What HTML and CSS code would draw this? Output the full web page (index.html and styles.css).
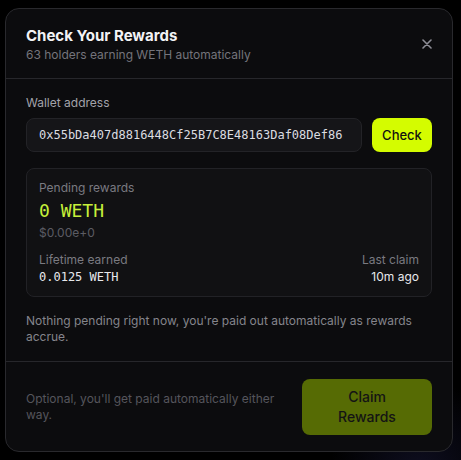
FILE: index.html
```html
<!DOCTYPE html>
<html lang="en">
<head>
  <meta charset="UTF-8" />
  <meta name="viewport" content="width=device-width, initial-scale=1.0" />
  <title>Check Your Rewards</title>
  <link rel="stylesheet" href="styles.css">
</head>
<body>
  <!-- ===== rewards modal ===== -->
  <div class="modal">
    <div class="modal-header">
      <div class="modal-titles">
        <h2 class="modal-title">Check Your Rewards</h2>
        <p class="modal-sub">63 holders earning WETH automatically</p>
      </div>
      <button class="close-btn" aria-label="Close">
        <svg width="10" height="10" viewBox="0 0 10 10"><path d="M1 1L9 9M9 1L1 9" stroke="#8e8e96" stroke-width="1.6" stroke-linecap="round"/></svg>
      </button>
    </div>

    <div class="modal-body">
      <label class="field-label">Wallet address</label>
      <div class="wallet-row">
        <div class="wallet-input">0x55bDa407d8816448Cf25B7C8E48163Daf08Def86</div>
        <button class="check-btn">Check</button>
      </div>

      <div class="reward-card">
        <div class="card-label">Pending rewards</div>
        <div class="pending-amount">0 WETH</div>
        <div class="pending-usd">$0.00e+0</div>
        <div class="stats-row">
          <div>
            <div class="card-label">Lifetime earned</div>
            <div class="stat-mono">0.0125 WETH</div>
          </div>
          <div class="stat-right">
            <div class="card-label">Last claim</div>
            <div class="stat-value">10m ago</div>
          </div>
        </div>
      </div>

      <p class="note">Nothing pending right now, you're paid out automatically as rewards accrue.</p>
    </div>

    <div class="modal-footer">
      <p class="footer-note">Optional, you'll get paid automatically either way.</p>
      <button class="claim-btn">Claim<br>Rewards</button>
    </div>
  </div>
</body>
</html>
```

FILE: styles.css
```css
body {
  margin: 0;
  height: 100vh;
  padding: 8px 0 0 5px;
  display: flex;
  align-items: flex-start;
  justify-content: flex-start;
  font-family: Inter, 'Noto Sans', sans-serif;
  background: radial-gradient(circle at 420px 470px, rgba(40, 40, 90, 0.35), rgba(0, 0, 0, 0) 90px), #000;
  box-sizing: border-box;
}

.modal {
  width: 448px;
  box-sizing: border-box;
  background-color: #0c0c0e;
  border: 1px solid #29292d;
  border-radius: 14px;
  overflow: hidden;
}

/* header */
.modal-header {
  display: flex;
  justify-content: space-between;
  align-items: center;
  padding: 16px 20px 15px 20px;
  border-bottom: 1px solid #27272b;
}
.modal-title {
  margin: 0;
  font-size: 15px;
  line-height: 21px;
  font-weight: 700;
  color: #f3f3f5;
}
.modal-sub {
  margin: 1px 0 0;
  font-size: 12px;
  line-height: 16px;
  color: #74747b;
}
.close-btn {
  background: none;
  border: none;
  padding: 0;
  width: 10px;
  height: 10px;
  display: flex;
  cursor: pointer;
}

/* body */
.modal-body {
  padding: 16px 20px 16px;
  border-bottom: 1px solid #27272b;
}
.field-label {
  display: block;
  font-size: 12px;
  line-height: 16px;
  color: #a3a3aa;
  margin-bottom: 7px;
}
.wallet-row {
  display: flex;
  gap: 10px;
}
.wallet-input {
  flex: 1;
  height: 34px;
  box-sizing: border-box;
  padding: 0 12px;
  display: flex;
  align-items: center;
  background-color: #151518;
  border: 1px solid #232327;
  border-radius: 8px;
  font-family: 'DejaVu Sans Mono', 'Liberation Mono', monospace;
  font-size: 12px;
  color: #dcdce0;
}
.check-btn {
  width: 60px;
  height: 34px;
  border: none;
  border-radius: 8px;
  background-color: #d4fc00;
  color: #111;
  font-family: Inter, sans-serif;
  font-size: 13px;
  font-weight: 500;
  cursor: pointer;
}

.reward-card {
  margin-top: 16px;
  padding: 11px 12px 11px;
  background-color: #111113;
  border: 1px solid #222226;
  border-radius: 8px;
}
.card-label {
  font-size: 12px;
  line-height: 16px;
  color: #7a7a81;
}
.pending-amount {
  margin-top: 3px;
  font-family: 'DejaVu Sans Mono', 'Liberation Mono', monospace;
  font-size: 18px;
  line-height: 24px;
  color: #c6f03a;
}
.pending-usd {
  margin-top: 2px;
  font-size: 12px;
  line-height: 16px;
  color: #5c5c63;
}
.stats-row {
  margin-top: 11px;
  display: flex;
  justify-content: space-between;
  align-items: flex-end;
}
.stat-mono {
  margin-top: 1px;
  font-family: 'DejaVu Sans Mono', 'Liberation Mono', monospace;
  font-size: 12px;
  line-height: 16px;
  color: #e8e8ec;
}
.stat-right {
  text-align: right;
}
.stat-value {
  margin-top: 1px;
  font-size: 12px;
  line-height: 16px;
  color: #e8e8ec;
}

.note {
  margin: 16px 0 0;
  font-size: 12px;
  line-height: 16px;
  color: #85858c;
}

/* footer */
.modal-footer {
  display: flex;
  align-items: center;
  gap: 16px;
  padding: 17px 20px 16px;
}
.footer-note {
  flex: 1;
  margin: 0;
  font-size: 12px;
  line-height: 16px;
  color: #55555c;
}
.claim-btn {
  width: 130px;
  height: 56px;
  border: none;
  border-radius: 8px;
  background-color: #566b04;
  color: #141414;
  font-family: Inter, sans-serif;
  font-size: 14px;
  line-height: 20px;
  font-weight: 500;
  cursor: pointer;
}
```
